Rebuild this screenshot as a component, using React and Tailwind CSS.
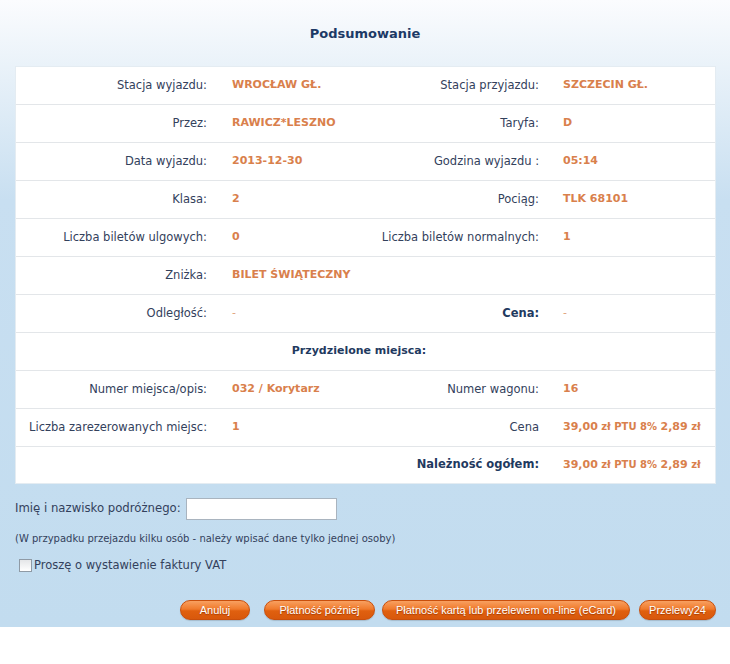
import React from 'react';

const Price = () => (
    <span>
        39,00<span className="text-[10px]"> zł PTU 8% </span>2,89<span className="text-[10px]"> zł</span>
    </span>
);

const rows = [
    { l1: "Stacja wyjazdu:", v1: "WROCŁAW GŁ.", l2: "Stacja przyjazdu:", v2: "SZCZECIN GŁ." },
    { l1: "Przez:", v1: "RAWICZ*LESZNO", l2: "Taryfa:", v2: "D" },
    { l1: "Data wyjazdu:", v1: "2013-12-30", l2: "Godzina wyjazdu :", v2: "05:14" },
    { l1: "Klasa:", v1: "2", l2: "Pociąg:", v2: "TLK 68101" },
    { l1: "Liczba biletów ulgowych:", v1: "0", l2: "Liczba biletów normalnych:", v2: "1" },
    { l1: "Zniżka:", v1: "BILET ŚWIĄTECZNY", l2: "", v2: "" },
    { l1: "Odległość:", v1: "-", l2: "Cena:", v2: "-", bold2: true, thin: true },
];

const seatRows = [
    { l1: "Numer miejsca/opis:", v1: "032 / Korytarz", l2: "Numer wagonu:", v2: "16" },
    { l1: "Liczba zarezerowanych miejsc:", v1: "1", l2: "Cena", v2: <Price /> },
    { l1: "", v1: "", l2: "Należność ogółem:", v2: <Price />, bold2: true },
];

const Row = ({ r, last }) => (
    <div className={`flex items-center ${last ? 'h-[36px]' : 'h-[38px] border-b border-[#e3e6e9]'}`}>
        <div className="w-[191px] shrink-0 text-right text-[11.5px] text-[#33415c] whitespace-nowrap">{r.l1}</div>
        <div className={`flex-1 min-w-0 pl-[25px] ${r.thin ? 'text-[#e0a27a]' : 'font-bold text-[#d9804c]'}`}>{r.v1}</div>
        <div className={`shrink-0 text-right whitespace-nowrap text-[11.5px] ${r.bold2 ? 'font-bold text-[#1f3a60]' : 'text-[#33415c]'}`}>{r.l2}</div>
        <div className={`w-[176px] shrink-0 pl-[24px] whitespace-nowrap ${r.thin ? 'text-[#e0a27a]' : 'font-bold text-[#d9804c]'}`}>{r.v2}</div>
    </div>
);

const Button = ({ children, w }) => (
    <button className={`${w} h-[20px] rounded-full border border-[#c94f0c] bg-[linear-gradient(to_bottom,#f8a060_0%,#f07a2c_45%,#e0600f_55%,#d8580c_100%)] text-white text-[11px] leading-[18px] [text-shadow:0_1px_1px_#a33d05] font-['Liberation_Sans',Arial,sans-serif] shadow-[0_1px_1px_rgba(0,0,0,0.15)]`}>
        {children}
    </button>
);

const App = () => {
    return (
        <div className="min-h-screen bg-white font-['DejaVu_Sans',Verdana,sans-serif] text-[11px]">
            <div className="bg-[linear-gradient(to_bottom,#fbfcfe_0px,#e6f0f8_80px,#c8dff1_200px,#c2dcef_100%)] pb-[7px]">

                {/* Title */}
                <h1 className="pt-[26px] h-[66px] text-center text-[13px] leading-[16px] font-bold text-[#1c3a66]">
                    Podsumowanie
                </h1>

                {/* Summary table */}
                <div className="mx-[15px] w-[701px] bg-white border border-[#e4ecf2]">
                    {rows.map((r, i) => <Row key={i} r={r} />)}
                    <div className="flex items-center justify-center h-[38px] border-b border-[#e3e6e9] pr-[13px] font-bold text-[#1f3a60]">
                        Przydzielone miejsca:
                    </div>
                    {seatRows.map((r, i) => <Row key={i} r={r} last={i === seatRows.length - 1} />)}
                </div>

                {/* Passenger */}
                <div className="mt-[14px] px-[15px] flex items-center h-[22px] text-[11.7px] text-[#33415c]">
                    <span className="w-[171px]">Imię i nazwisko podróżnego:</span>
                    <input type="text" className="w-[151px] h-[22px] bg-white border border-[#a9b4bf]" />
                </div>
                <p className="mt-[12px] px-[15px] text-[10px] text-[#33415c] leading-[13px]">
                    (W przypadku przejazdu kilku osób - należy wpisać dane tylko jednej osoby)
                </p>
                <label className="mt-[12px] pl-[19px] flex items-center gap-[2px] text-[11.5px] text-[#33415c]">
                    <span className="w-[13px] h-[13px] border border-[#8f9aa5] bg-[linear-gradient(to_bottom,#e4e6e8,#ffffff)]"></span>
                    Proszę o wystawienie faktury VAT
                </label>

                {/* Actions */}
                <div className="mt-[26px] flex justify-end pr-[14px]">
                    <Button w="w-[70px]">Anuluj</Button>
                    <div className="w-[14px]"></div>
                    <Button w="w-[111px]">Płatność później</Button>
                    <div className="w-[7px]"></div>
                    <Button w="w-[248px]">Płatność kartą lub przelewem on-line (eCard)</Button>
                    <div className="w-[9px]"></div>
                    <Button w="w-[77px]">Przelewy24</Button>
                </div>
            </div>
        </div>
    );
};

export default App;
